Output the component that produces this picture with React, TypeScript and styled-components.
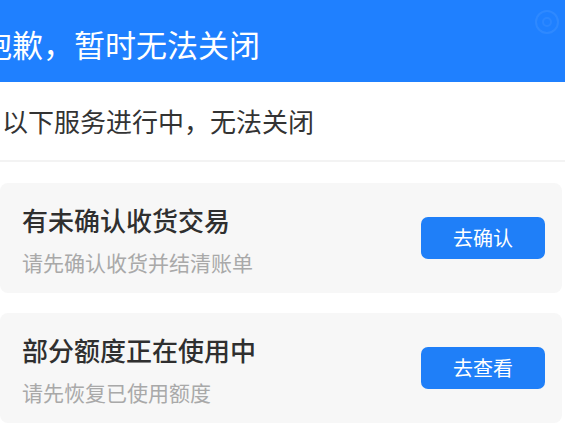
import React from "react";
import styled, { createGlobalStyle } from "styled-components";

const GlobalStyle = createGlobalStyle`
  html, body { margin: 0; padding: 0; background: #ffffff; }
  body { font-family: "Noto Sans CJK SC", "Noto Sans", sans-serif; }
  * { box-sizing: border-box; }
`;

const Page = styled.div`
  width: 565px;
  height: 423px;
  overflow: hidden;
  background: #ffffff;
  display: flex;
  flex-direction: column;
`;

const Header = styled.header`
  position: relative;
  height: 82px;
  flex-shrink: 0;
  background: #1f80ff;
  display: flex;
  align-items: center;
  padding-top: 6px;
  overflow: hidden;
`;

const Title = styled.h1`
  margin: 0 0 0 -19px;
  font-size: 31px;
  font-weight: 400;
  line-height: 40px;
  color: #ffffff;
  white-space: nowrap;
`;

const CornerIcon = styled.svg`
  position: absolute;
  right: 5px;
  top: 9px;
`;

const Notice = styled.div`
  height: 78px;
  flex-shrink: 0;
  display: flex;
  align-items: center;
  padding-left: 2px;
  font-size: 26px;
  line-height: 34px;
  color: #333333;
  white-space: nowrap;
`;

const Divider = styled.div`
  height: 2px;
  flex-shrink: 0;
  background: #f3f3f3;
`;

const List = styled.div`
  display: flex;
  flex-direction: column;
  gap: 20px;
  padding: 21px 3px 0 0;
`;

const Card = styled.div`
  height: 110px;
  flex-shrink: 0;
  background: #f7f7f7;
  border-radius: 8px;
  display: flex;
  align-items: center;
  justify-content: space-between;
  padding: 0 17px 0 22px;
`;

const Info = styled.div`
  display: flex;
  flex-direction: column;
  gap: 12px;
  padding-top: 4px;
`;

const CardTitle = styled.div`
  font-size: 26px;
  font-weight: 500;
  line-height: 32px;
  color: #2f2f2f;
  white-space: nowrap;
`;

const CardSub = styled.div`
  font-size: 21px;
  line-height: 28px;
  color: #a9a9a9;
  white-space: nowrap;
`;

const ActionButton = styled.button`
  width: 124px;
  height: 42px;
  border: none;
  border-radius: 7px;
  background: #1f7ff8;
  color: #ffffff;
  font-family: inherit;
  font-size: 20px;
  line-height: 28px;
  padding: 0;
  cursor: pointer;
`;

const items = [
  { title: "有未确认收货交易", sub: "请先确认收货并结清账单", action: "去确认" },
  { title: "部分额度正在使用中", sub: "请先恢复已使用额度", action: "去查看" },
];

export default function App() {
  return (
    <>
      <GlobalStyle />
      <Page>
        <Header>
          <Title>抱歉，暂时无法关闭</Title>
          <CornerIcon width="26" height="26" viewBox="0 0 26 26" fill="none">
            <circle cx="13" cy="13" r="11" stroke="rgba(255,255,255,0.07)" strokeWidth="2" />
            <circle cx="13" cy="13" r="4" stroke="rgba(255,255,255,0.06)" strokeWidth="2" />
          </CornerIcon>
        </Header>
        <Notice>以下服务进行中，无法关闭</Notice>
        <Divider />
        <List>
          {items.map((it) => (
            <Card key={it.title}>
              <Info>
                <CardTitle>{it.title}</CardTitle>
                <CardSub>{it.sub}</CardSub>
              </Info>
              <ActionButton>{it.action}</ActionButton>
            </Card>
          ))}
        </List>
      </Page>
    </>
  );
}
